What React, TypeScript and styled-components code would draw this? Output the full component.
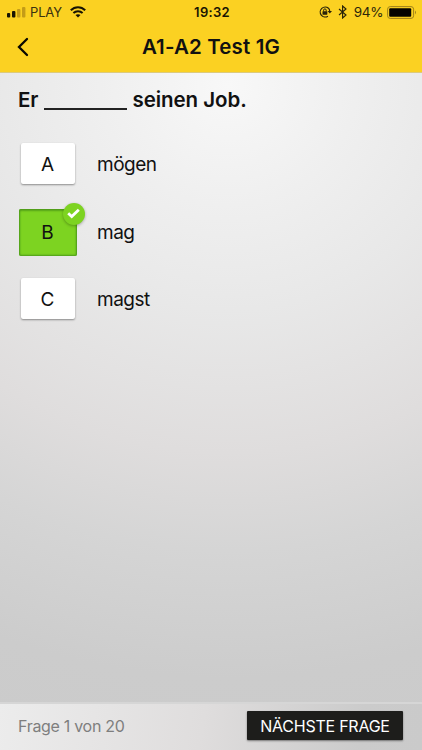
import React from "react";
import styled, { createGlobalStyle, css } from "styled-components";

const GlobalStyle = createGlobalStyle`
  * { box-sizing: border-box; }
  body { margin: 0; }
`;

const Screen = styled.div`
  width: 422px;
  height: 750px;
  display: flex;
  flex-direction: column;
  overflow: hidden;
  color: #111;
  font-family: Inter, "Liberation Sans", sans-serif;
  background: radial-gradient(ellipse 800px 750px at 54% 85px, #f8f8f8 0%, #efefef 16%, #e8e8e8 30%, #dfdddd 49%, #d5d5d5 62%, #cccccc 79%, #cacaca 100%);
`;

const Header = styled.header`
  height: 73px;
  flex: none;
  background: #fbd122;
  border-bottom: 1px solid #dcca7c;
`;

const StatusBar = styled.div`
  height: 24px;
  padding: 0 5px 0 7px;
  display: grid;
  grid-template-columns: 1fr auto 1fr;
  align-items: center;
`;

const StatusGroup = styled.div<{ $end?: boolean }>`
  display: flex;
  align-items: center;
  justify-content: ${(p) => (p.$end ? "flex-end" : "flex-start")};
`;

const Carrier = styled.span`
  font-size: 13px;
  letter-spacing: -0.15px;
  color: #3a3210;
  margin: 0 8px 0 4px;
`;

const Clock = styled.span`
  font-size: 13px;
  font-weight: 600;
  letter-spacing: 0.3px;
  color: #191502;
`;

const Percent = styled.span`
  font-size: 13.5px;
  letter-spacing: -0.4px;
  color: #2c260a;
  margin: 0 4px 0 7px;
`;

const NavBar = styled.nav`
  height: 46px;
  padding: 0 16px;
  display: grid;
  grid-template-columns: 32px 1fr 32px;
  align-items: center;
`;

const BackButton = styled.button`
  display: flex;
  padding: 0;
  border: 0;
  background: none;
`;

const Title = styled.h1`
  margin: 0;
  text-align: center;
  font-size: 20.5px;
  font-weight: 600;
  line-height: 24px;
  letter-spacing: 0.15px;
  white-space: nowrap;
`;

const Content = styled.main`
  flex: 1;
  padding: 14px 18px 0;
`;

const Question = styled.h2`
  margin: 0;
  display: flex;
  height: 26px;
  font-size: 20.5px;
  line-height: 26px;
  font-weight: 600;
  letter-spacing: -0.05px;
`;

const Blank = styled.span`
  width: 83px;
  height: 23px;
  margin: 0 5px 0 6px;
  border-bottom: 2px solid #222;
`;

const Answers = styled.div`
  margin-top: 17px;
  display: flex;
  flex-direction: column;
`;

const AnswerRow = styled.div`
  height: 67.5px;
  display: grid;
  grid-template-columns: 58px 1fr;
  column-gap: 21px;
  align-items: center;
`;

const Choice = styled.button<{ $correct?: boolean }>`
  position: relative;
  justify-self: center;
  display: grid;
  place-items: center;
  padding: 2px 0 0;
  border: 0;
  border-radius: 2px;
  width: 54px;
  height: 41px;
  margin-left: 1px;
  color: #111;
  font: 400 19px Inter, sans-serif;
  background: #fff;
  box-shadow: 0 1px 2px rgba(0, 0, 0, 0.4);
  ${(p) =>
    p.$correct &&
    css`
      width: 58px;
      height: 47px;
      margin-top: 2px;
      padding: 0;
      background: #7dd321;
      box-shadow: inset 0 0 2px 1px #4b991b, inset 0 2px 2px rgba(45, 105, 15, 0.35);
    `}
`;

const Badge = styled.span`
  position: absolute;
  top: -6px;
  right: -8px;
  width: 22px;
  height: 22px;
  display: grid;
  place-items: center;
  border-radius: 50%;
  background: #7dd321;
  box-shadow: 0 1px 3px rgba(0, 0, 0, 0.3);
`;

const AnswerText = styled.span`
  font-size: 19px;
  line-height: 26px;
  letter-spacing: -0.5px;
  padding-top: 3px;
`;

const Footer = styled.footer`
  height: 48px;
  flex: none;
  padding: 0 19px 0 18px;
  display: flex;
  align-items: center;
  justify-content: space-between;
  border-top: 2px solid #d6d6d6;
  background: linear-gradient(100deg, #ececec 0%, #dfdddd 48%, #cbcbcb 85%, #cacaca 100%);
`;

const Progress = styled.span`
  font-size: 16px;
  letter-spacing: -0.3px;
  color: #7e7e7e;
  padding-bottom: 2px;
`;

const NextButton = styled.button`
  width: 156px;
  height: 29px;
  margin-bottom: 3px;
  padding: 0;
  border: 0;
  border-radius: 1px;
  background: #1d1d1b;
  color: #fff;
  font: 400 16px/30px Inter, sans-serif;
  letter-spacing: -0.25px;
  white-space: nowrap;
  box-shadow: 0 1px 2px rgba(0, 0, 0, 0.45);
`;

const Signal = () => (
  <svg width="19" height="12" viewBox="0 0 19 12">
    <rect x="0" y="7" width="3.2" height="4.5" rx="1" fill="#171303" />
    <rect x="5" y="5" width="3.4" height="6.5" rx="1" fill="#171303" />
    <rect x="10" y="3" width="3.4" height="8.5" rx="1" fill="#c49c17" />
    <rect x="15" y="1" width="3.4" height="10.5" rx="1" fill="#c49c17" />
  </svg>
);

const Wifi = () => (
  <svg width="16" height="12" viewBox="0 0 16 12" fill="none" stroke="#171303" strokeWidth="2">
    <path d="M.8 4.3C4.9.1 11.1.1 15.2 4.3" />
    <path d="M3.4 7C6 4.5 10 4.5 12.6 7" />
    <path d="M8 11.6 5.5 9.1C7 7.9 9 7.9 10.5 9.1Z" fill="#171303" stroke="none" />
  </svg>
);

const RotationLock = () => (
  <svg width="13" height="12" viewBox="0 0 13 12" fill="none" stroke="#292309">
    <path d="M9.5 2.2A5 5 0 1 0 8.9 10.2M9.5 2.2A5 5 0 0 1 10.7 5.2" strokeWidth="1.2" />
    <path d="M8.5 5.1H13L10.8 7.6Z" fill="#292309" stroke="none" />
    <rect x="3.5" y="5.2" width="4.8" height="3.5" rx=".4" fill="#292309" stroke="none" />
    <path d="M4.6 5.4V4.2a1.3 1.3 0 0 1 2.6 0v1.2" />
  </svg>
);

const Bluetooth = () => (
  <svg width="9" height="14" viewBox="0 0 9 14" fill="none" stroke="#292309" strokeWidth="1.15">
    <path d="M1 4 8 10 4.6 13V1L8 4 1 10" />
  </svg>
);

const Battery = () => (
  <svg width="30" height="13" viewBox="0 0 30 13">
    <rect x=".6" y=".6" width="26" height="11.8" rx="2.6" fill="none" stroke="#9f8119" />
    <rect x="2.2" y="2.2" width="22" height="8.6" rx="1" fill="#050400" />
    <path d="M28 4.6Q30 6.5 28 8.4Z" fill="#9f8119" />
  </svg>
);

const BluetoothSlot = styled.span`
  display: flex;
  margin-left: 6px;
`;

const answers = [
  { letter: "A", text: "mögen" },
  { letter: "B", text: "mag", correct: true },
  { letter: "C", text: "magst" },
];

export default function App() {
  return (
    <Screen>
      <GlobalStyle />
      <Header>
        <StatusBar>
          <StatusGroup>
            <Signal />
            <Carrier>PLAY</Carrier>
            <Wifi />
          </StatusGroup>
          <Clock>19:32</Clock>
          <StatusGroup $end>
            <RotationLock />
            <BluetoothSlot>
              <Bluetooth />
            </BluetoothSlot>
            <Percent>94%</Percent>
            <Battery />
          </StatusGroup>
        </StatusBar>
        <NavBar>
          <BackButton aria-label="Zurück">
            <svg width="14" height="20" viewBox="0 0 14 20" fill="none" stroke="#090700" strokeWidth="2.3" strokeLinecap="round">
              <path d="M11 2 3 10l8 8" />
            </svg>
          </BackButton>
          <Title>A1-A2 Test 1G</Title>
        </NavBar>
      </Header>
      <Content>
        <Question>
          <span>Er</span>
          <Blank />
          <span>seinen Job.</span>
        </Question>
        <Answers>
          {answers.map((a) => (
            <AnswerRow key={a.letter}>
              <Choice $correct={a.correct}>
                {a.letter}
                {a.correct && (
                  <Badge>
                    <svg width="13" height="11" viewBox="0 0 13 11" fill="none" stroke="#fff" strokeWidth="2.8">
                      <path d="M1.2 5.3 4.7 8.6 11.8 1.8" />
                    </svg>
                  </Badge>
                )}
              </Choice>
              <AnswerText>{a.text}</AnswerText>
            </AnswerRow>
          ))}
        </Answers>
      </Content>
      <Footer>
        <Progress>Frage 1 von 20</Progress>
        <NextButton>NÄCHSTE FRAGE</NextButton>
      </Footer>
    </Screen>
  );
}
